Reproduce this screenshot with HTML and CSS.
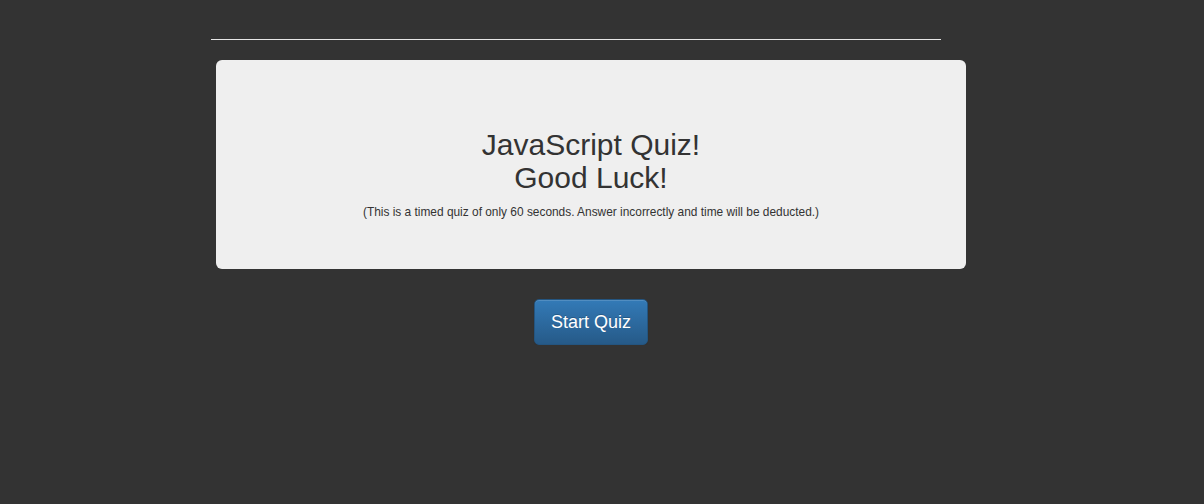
FILE: index.html
```html
<!DOCTYPE html>
<html>
<head>
<meta charset="utf-8">
<link rel="stylesheet" href="styles.css">
</head>
<body>
<div class="page">
  <hr class="rule">
  <div class="card">
    <h1 class="title">JavaScript Quiz!<br>Good Luck!</h1>
    <p class="note">(This is a timed quiz of only 60 seconds. Answer incorrectly and time will be deducted.)</p>
  </div>
  <div class="actions">
    <button class="btn">Start Quiz</button>
  </div>
</div>
</body>
</html>
```
FILE: styles.css
```css
html, body {
  margin: 0;
  padding: 0;
  background: #333333;
  font-family: "Liberation Sans", Arial, sans-serif;
  color: #333333;
}
.page {
  padding: 39px 0 0 211px;
  width: 755px;
}
.rule {
  margin: 0;
  border: 0;
  height: 1px;
  width: 730px;
  background: #e6e6e6;
}
.card {
  margin: 20px 0 0 5px;
  width: 750px;
  height: 209px;
  box-sizing: border-box;
  background: #efefef;
  border-radius: 6px;
  display: flex;
  flex-direction: column;
  align-items: center;
  padding-top: 68px;
}
.title {
  margin: 0;
  font-weight: normal;
  font-size: 30px;
  line-height: 33px;
  text-align: center;
  color: #333333;
}
.note {
  margin: 10px 0 0;
  font-size: 11.9px;
  line-height: 16px;
  color: #333333;
}
.actions {
  margin-left: 5px;
  width: 750px;
  display: flex;
  justify-content: center;
  padding-top: 30px;
}
.btn {
  font-family: "Liberation Sans", Arial, sans-serif;
  font-size: 18px;
  line-height: 24px;
  padding: 10px 16px;
  color: #ffffff;
  border: 1px solid #245580;
  border-radius: 5px;
  background: linear-gradient(to bottom, #337ab7 0%, #265a88 100%);
  box-shadow: inset 0 1px 0 rgba(255,255,255,0.15), 0 1px 1px rgba(0,0,0,0.075);
  text-shadow: 0 -1px 0 rgba(0,0,0,0.2);
  cursor: pointer;
}
```
